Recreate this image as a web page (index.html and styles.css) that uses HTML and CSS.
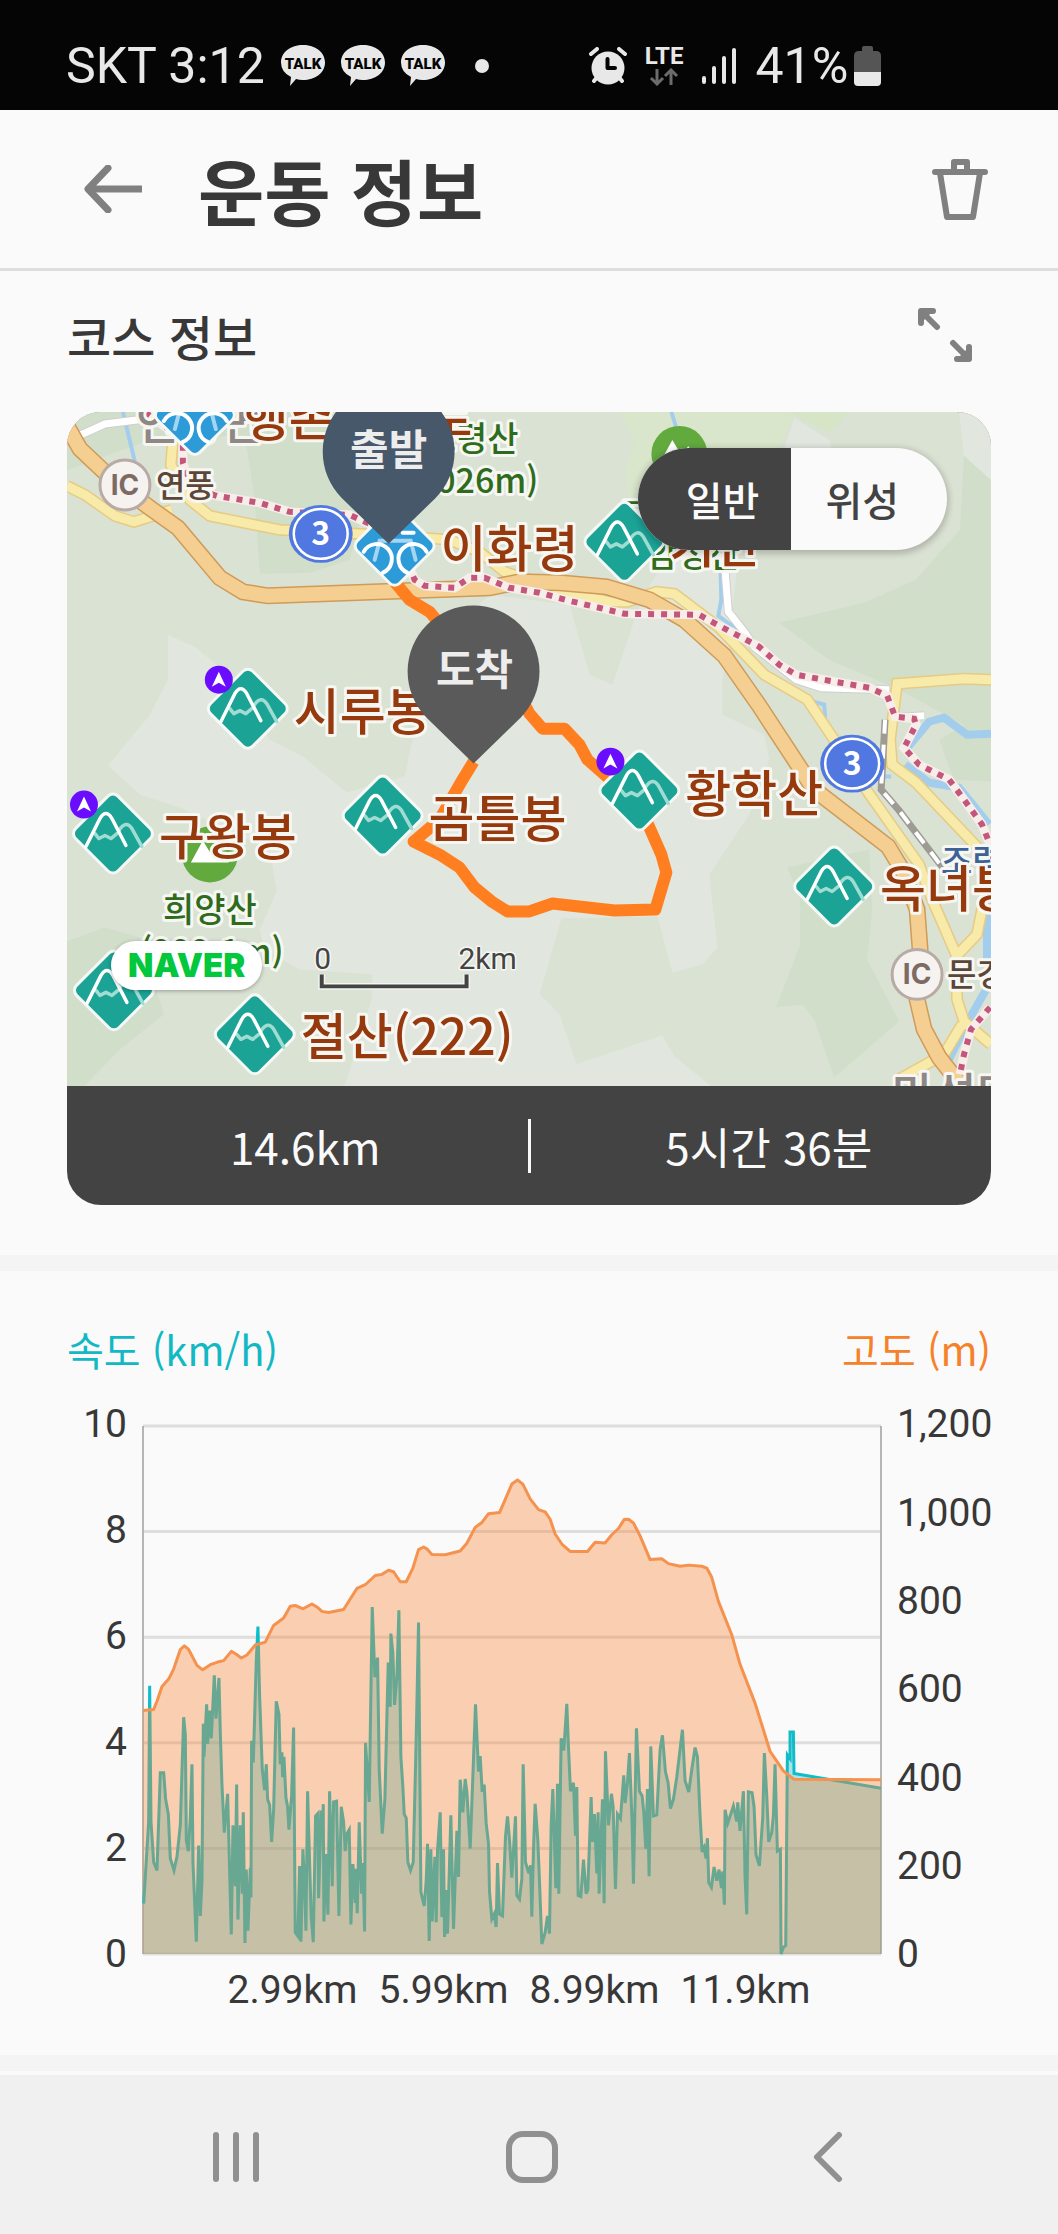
FILE: index.html
```html
<!DOCTYPE html>
<html lang="ko">
<head>
    <meta charset="UTF-8">
    <meta name="viewport" content="width=device-width, initial-scale=1.0">
    <title>운동 정보</title>
    <link rel="stylesheet" href="styles.css">
</head>
<body>
    <div class="status-bar">
        <div class="status-left">
            <span>SKT 3:12</span>
            <svg class="talk-icon" viewBox="0 0 44 42">
                <g id="talk">
                    <path d="M22 0C34 0 44 7 44 17.500S34 35 22 35Q18 35 15 34L9 41L10 32Q0 27 0 17.500C0 7 10 0 22 0Z" fill="#e8e8e8"/>
                    <text x="22" y="24" class="talk-text">TALK</text>
                </g>
            </svg>
            <svg class="talk-icon" viewBox="0 0 44 42"><use href="#talk"/></svg>
            <svg class="talk-icon" viewBox="0 0 44 42"><use href="#talk"/></svg>
            <span class="more-dot"></span>
        </div>
        <div class="status-right">
            <svg width="38" height="38" viewBox="0 0 38 38">
                <circle cx="19" cy="21" r="16.500" fill="#e8e8e8"/>
                <path d="M2 7L8 2M36 7L30 2M5 34L9 29M33 34L29 29" stroke="#e8e8e8" stroke-width="4" stroke-linecap="round"/>
                <path d="M18.500 12V21H26" fill="none" stroke="#050505" stroke-width="4" stroke-linecap="round" stroke-linejoin="round"/>
            </svg>
            <div class="lte">
                <span>LTE</span>
                <svg width="30" height="18" viewBox="0 0 30 18">
                    <path d="M8 1V15M2 10L8 16L14 10M22 17V3M16 8L22 2L28 8" fill="none" stroke="#6c6c6c" stroke-width="3"/>
                </svg>
            </div>
            <svg width="36" height="38" viewBox="0 0 36 38">
                <path d="M3 31V35M13 21V35M23 11V35M33 3V35" stroke="#e8e8e8" stroke-width="4" stroke-linecap="round"/>
            </svg>
            <span class="battery-text">41%</span>
            <svg width="27" height="40" viewBox="0 0 27 40">
                <path d="M8 5V2Q8 0 10 0H17Q19 0 19 2V5H22Q27 5 27 10V27H0V10Q0 5 5 5Z" fill="#555"/>
                <path d="M0 26H27V36Q27 40 23 40H4Q0 40 0 36Z" fill="#e8e8e8"/>
            </svg>
        </div>
    </div>

    <header class="app-bar">
        <button class="icon-button" aria-label="뒤로">
            <svg width="58" height="48" viewBox="0 0 58 48">
                <path d="M4 24H58" fill="none" stroke="#808080" stroke-width="7"/>
                <path d="M24 3L4 24L24 45" fill="none" stroke="#808080" stroke-width="7" stroke-linecap="round" stroke-linejoin="round"/>
            </svg>
        </button>
        <h1>운동 정보</h1>
        <button class="icon-button" aria-label="삭제">
            <svg width="56" height="63" viewBox="0 0 56 63">
                <g fill="none" stroke="#808080" stroke-width="6" stroke-linecap="round" stroke-linejoin="round">
                    <path d="M3 14H53M22 13V4H35V13"/>
                    <path d="M8 15L15 59H41L48 15"/>
                </g>
            </svg>
        </button>
    </header>

    <main>
        <section class="course">
            <div class="section-head">
                <h2>코스 정보</h2>
                <button class="icon-button" aria-label="지도 확대">
                    <svg width="54" height="54" viewBox="0 0 54 54">
                        <g fill="none" stroke="#808080" stroke-width="6" stroke-linecap="round" stroke-linejoin="round">
                            <path d="M15 3H3V15M4 4L19 19"/>
                            <path d="M39 51H51V39M50 50L35 35"/>
                        </g>
                        <path d="M3 3H15L3 15ZM51 51H39L51 39Z" fill="#808080"/>
                    </svg>
                </button>
            </div>

            <div class="course-card">
                <div class="map">
                    <svg class="map-canvas" viewBox="67 412 925 675" preserveAspectRatio="xMidYMid slice">
                        <defs>
                            <g id="mountain">
                                <rect x="-30" y="-30" width="60" height="60" rx="7" transform="rotate(45)" fill="#1ba396" stroke="#f5f8f5" stroke-width="3"/>
                                <g fill="none" stroke-linecap="round" stroke-linejoin="round" stroke-width="3.500">
                                    <path d="M-18 0L-14 5L-8 2L-2 5L4 0M6 -3Q13 -14 19 -5L29 13" stroke="#9fdcd2"/>
                                    <path d="M-27 13L-13 -15Q-7 -25 -1 -15L13 12" stroke="#fff"/>
                                </g>
                            </g>
                            <g id="bike">
                                <rect x="-30" y="-30" width="60" height="60" rx="7" transform="rotate(45)" fill="#2e9bd9" stroke="#f5f8f5" stroke-width="3"/>
                                <g fill="none" stroke-width="4" stroke-linecap="round">
                                    <path d="M-20 14L-15 -5H16L21 14" stroke="#a5d5f2"/>
                                    <path d="M8 -13H19M-31 6A15 15 0 1 1 -12 27M32 6A15 15 0 1 0 13 27" stroke="#fff"/>
                                </g>
                            </g>
                            <g id="compass">
                                <circle r="14" fill="#6a0dff"/>
                                <path d="M0 -8L7 7L0 3L-7 7Z" fill="#fff"/>
                            </g>
                            <g id="peak">
                                <circle r="28" fill="#62aa3e"/>
                                <path d="M-19 8L-7 -14L2 1L9 -8L19 8Z" fill="#fff"/>
                            </g>
                            <g id="route3">
                                <ellipse rx="32" ry="29" fill="#5078e0"/>
                                <ellipse rx="27" ry="25" fill="none" stroke="#fff" stroke-width="2.500"/>
                                <text y="11" class="shield-text">3</text>
                            </g>
                            <g id="ic">
                                <circle r="25" fill="#f5f2f0" stroke="#b8aaa4" stroke-width="3"/>
                                <text y="10" class="ic-text">IC</text>
                            </g>
                            <path id="pin" d="M-47 47A66 66 0 1 1 47 47L0 93Z"/>
                            <path id="lane" d="M67 440L85 433L105 424L145 419M725 560L729 612L745 632L755 647L797 680L822 688L890 690M896 718L925 716"/>
                            <path id="road" d="M67 486L85 495L115 516L134 522L172 510M173 440L171 465L190 500L210 516L280 530L400 536L450 540L480 552L505 572L560 590L610 602L628 602L657 592L675 594L720 628L765 675L808 700L835 740L860 780L920 865L933 900L957 955L958 1000L965 1022L992 1045M992 680L965 679L898 684L891 740L893 765L917 783L990 860M957 957L978 935L985 900M963 1025L945 1055L900 1080"/>
                            <path id="highway" d="M67 426L80 449L114 481L150 508L178 528L220 578L243 592L268 596L490 588L520 582L560 583L607 587L650 600L685 620L725 656L760 706L815 790L889 847L903 870L918 910L921 950L918 1000L925 1030L940 1058L965 1090"/>
                            <path id="trail" d="M145 412L183 440V463L192 488L217 496L260 503L290 512L350 515L370 524L400 545L415 580L425 586L455 588L470 578L485 578L510 588L540 593L570 601L625 614L700 615L720 626L760 647L780 665L797 675L830 681L870 688L888 696L896 717L915 719L917 725L905 748L920 765L950 780L965 800L983 825L991 845M991 1008L972 1030L965 1055L961 1075"/>
                            <path id="rail" d="M886 720L882 790L900 811L945 870"/>
                        </defs>

                        <!-- terrain -->
                        <rect x="67" y="412" width="925" height="675" fill="#dae2d3"/>
                        <g fill="#e1e7de">
                            <path d="M168 635L195 647L225 672L270 740L303 757L347 793L405 777L413 740L440 640L490 595L570 605L590 675L613 685L642 600L660 570L675 500H745L730 640L723 680V715L765 735L770 760L750 815L710 875L718 948L703 965L673 973L658 917L562 919L540 995L560 1015L577 1065L663 1036L675 1057L712 1087H345L372 1000L373 975L300 970L265 950L260 930L277 892L270 850L180 808L140 795L108 766L150 715L168 680Z"/>
                            <path d="M795 418L830 440L840 470H778Z"/>
                            <path d="M965 456L992 480V412H960Z"/>
                        </g>
                        <g fill="#d1dec9">
                            <path d="M67 470L150 440L245 435L255 500L260 574L310 573L350 560L390 412H67Z"/>
                            <path d="M965 456L961 530L917 580L865 603L780 623L830 660L900 690L992 740V480Z"/>
                            <path d="M788 868L870 850L873 910L868 960L900 1022L835 1078L815 1020L803 1005L777 1008L801 945V900Z"/>
                            <path d="M67 942L105 928L140 938L164 1015L120 1050L84 1087H67Z"/>
                            <path d="M940 740L992 710V782L955 780Z"/>
                        </g>
                        <path d="M620 412L636 442L625 470L630 500L660 520H760L780 445L798 412Z" fill="#d9e6cb"/>
                        <path d="M790 412L830 433L850 412Z" fill="#d5e5c5"/>

                        <!-- water -->
                        <g class="water">
                            <path d="M123 412L135 462M672 412L677 428M721 560L722 600L719 616L748 637M810 701L825 705L826 718M865 777H892" stroke-width="4"/>
                            <path d="M905 752L930 722L945 718L968 735L992 734M906 765L930 783L960 788L990 825M988 900V960M990 985L970 1020L950 1060" stroke-width="8"/>
                        </g>

                        <!-- roads, casing first -->
                        <g fill="none">
                            <use href="#lane" stroke="#cfcfcf" stroke-width="9"/>
                            <use href="#lane" stroke="#fff" stroke-width="7"/>
                            <use href="#road" stroke="#e6cb84" stroke-width="12"/>
                            <use href="#road" stroke="#f8eaa9" stroke-width="9"/>
                            <use href="#highway" stroke="#cf9b58" stroke-width="17"/>
                            <use href="#highway" stroke="#f5cf92" stroke-width="14"/>
                            <use href="#rail" stroke="#9e9b95" stroke-width="7"/>
                            <use href="#rail" stroke="#fff" stroke-width="4" stroke-dasharray="14 11"/>
                            <use href="#trail" stroke="#f7eeea" stroke-width="9"/>
                            <use href="#trail" stroke="#c4567b" stroke-width="6" stroke-dasharray="6 7"/>
                        </g>

                        <!-- recorded route -->
                        <path d="M395 582L410 600L430 612L445 630M520 695L530 714L543 729L565 729L580 745L588 760L605 775L640 805L662 855L667 873L656 910L615 911L553 904L530 912L508 912L492 902L475 888L460 868L440 855L414 842L440 820L463 780L474 762" fill="none" stroke="#ff7f20" stroke-width="12" stroke-linejoin="round"/>

                        <!-- places -->
                        <text x="136" y="439" class="town">연풍면</text>
                        <text x="893" y="1112" class="town">마성면</text>
                        <use href="#ic" x="125" y="485"/>
                        <text x="156" y="497" class="junction">연풍</text>
                        <use href="#ic" x="918" y="975"/>
                        <text x="948" y="987" class="junction">문경</text>
                        <use href="#route3" x="321" y="534"/>
                        <use href="#route3" x="853" y="764"/>
                        <use href="#peak" x="680" y="454"/>
                        <use href="#peak" x="210" y="855"/>
                        <g class="hill">
                            <text x="472" y="451">조령산</text>
                            <text x="472" y="493">(1026m)</text>
                            <text x="636" y="527">고</text>
                            <text x="694" y="567">암성산</text>
                            <text x="210" y="923">희양산</text>
                            <text x="212" y="965">(999.1m)</text>
                        </g>
                        <text x="942" y="875" class="station">조령</text>

                        <use href="#bike" x="195" y="415"/>
                        <use href="#bike" x="395" y="546"/>
                        <use href="#mountain" x="625" y="542"/>
                        <use href="#mountain" x="248" y="709"/>
                        <use href="#mountain" x="113" y="834"/>
                        <use href="#mountain" x="383" y="816"/>
                        <use href="#mountain" x="640" y="791"/>
                        <use href="#mountain" x="835" y="887"/>
                        <use href="#mountain" x="255" y="1035"/>
                        <use href="#mountain" x="114" y="991"/>
                        <use href="#compass" x="219" y="680"/>
                        <use href="#compass" x="84" y="805"/>
                        <use href="#compass" x="611" y="762"/>
                        <g class="summit">
                            <text x="243" y="436">행촌교차로</text>
                            <text x="441" y="567">이화령</text>
                            <text x="670" y="563">기산</text>
                            <text x="294" y="730">시루봉</text>
                            <text x="159" y="855">구왕봉</text>
                            <text x="429" y="837">곰틀봉</text>
                            <text x="686" y="812">황학산</text>
                            <text x="881" y="908">옥녀봉</text>
                            <text x="301" y="1056">절산(222)</text>
                        </g>

                        <!-- start and finish -->
                        <use href="#pin" x="389" y="451" fill="#46586a"/>
                        <text x="389" y="465" class="pin-text">출발</text>
                        <use href="#pin" x="474" y="671" fill="#5a5a5a"/>
                        <text x="475" y="685" class="pin-text">도착</text>

                        <!-- scale -->
                        <path d="M322 975V987H467V975" fill="none" stroke="#f2f5f0" stroke-width="7"/>
                        <path d="M322 975V987H467V975" fill="none" stroke="#444" stroke-width="4"/>
                        <text x="323" y="970" class="scale-text">0</text>
                        <text x="488" y="970" class="scale-text">2km</text>
                    </svg>
                    <div class="map-type">
                        <button class="selected">일반</button>
                        <button>위성</button>
                    </div>
                    <a class="naver" href="#">NAVER</a>
                </div>
                <div class="summary">
                    <span>14.6km</span>
                    <span>5시간 36분</span>
                </div>
            </div>
        </section>

        <section class="graph">
            <div class="legend">
                <span class="speed">속도 (km/h)</span>
                <span class="altitude">고도 (m)</span>
            </div>
            <div class="chart">
                <div class="axis axis-left">
                    <span>10</span><span>8</span><span>6</span><span>4</span><span>2</span><span>0</span>
                </div>
                <svg class="plot" viewBox="38 71 2215 1427" preserveAspectRatio="none">
                    <path class="grid-line" d="M38 71H2253M38 356H2253M38 642H2253M38 927H2253M38 1213H2253M38 1498H2253"/>
                    <path class="frame-line" d="M38 71V1498M2253 71V1498"/>
                    <path id="speedArea" class="speed-area"/>
                    <path id="speedLine" class="speed-line"/>
                    <path id="altitudeArea" class="altitude-area"/>
                    <path id="altitudeLine" class="altitude-line"/>
                </svg>
                <div class="axis axis-right">
                    <span>1,200</span><span>1,000</span><span>800</span><span>600</span><span>400</span><span>200</span><span>0</span>
                </div>
                <div class="distance">
                    <span>2.99km</span><span>5.99km</span><span>8.99km</span><span>11.9km</span>
                </div>
            </div>
        </section>
    </main>

    <nav class="nav-bar">
        <button class="icon-button" aria-label="최근 앱">
            <svg width="50" height="54" viewBox="0 0 50 54">
                <path d="M5 5V49M25 5V49M45 5V49" stroke="#909090" stroke-width="6" stroke-linecap="round"/>
            </svg>
        </button>
        <button class="icon-button" aria-label="홈">
            <svg width="54" height="54" viewBox="0 0 54 54">
                <rect x="4" y="4" width="46" height="46" rx="14" fill="none" stroke="#909090" stroke-width="6"/>
            </svg>
        </button>
        <button class="icon-button" aria-label="이전">
            <svg width="30" height="54" viewBox="0 0 30 54">
                <path d="M26 5L4 27L26 49" fill="none" stroke="#909090" stroke-width="6" stroke-linecap="round" stroke-linejoin="round"/>
            </svg>
        </button>
    </nav>

    <script>
        // x y pairs in plot units, the return part starts at RETURN_X
        const RETURN_X = 1080;
        const PLOT_BOTTOM = 1498;

        const speedOut = '40 1362 55 1140 58 773 62 1140 70 1250 80 1272 90 1008 100 1008 106 1080 114 1120 120 1240 131 1272 140 1235 150 1150 160 858 165 905 168 1190 174 1220 180 1130 185 985 188 1250 194 1380 198 1465 205 1205 210 1395 215 1300 219 876 221 965 229 823 232 930 238 840 243 915 252 745 257 862 266 752 270 900 275 1040 282 1170 292 1065 303 1445 308 1150 315 1315 319 1040 323 1405 330 1150 336 1335 339 1115 344 1468 348 1270 353 1435 360 1265 362 1345 364 922 369 980 378 705 383 613 388 800 396 1000 403 1055 408 985 412 1080 418 1095 424 1195 430 1110 438 815 446 850 450 985 455 953 457 1020 461 965 467 1075 472 1100 476 1162 484 1070 490 886 495 1440 503 1450 508 1260 512 1465 518 1215 523 1315 527 1435 532 1058 538 1250 543 1400 549 1466 556 1125 563 1118 565 1347 573 1110 577 1165 579 1093 581 1410 587 1228 593 1392 598 1058 606 1315 610 1087 619 1085 626 1395 633 1100 640 1140 645 1220 650 1173 657 1162 662 1418 668 1255 675 1360 677 1268 681 1388 687 1142 694 1335 698 1252 703 1437 706 927 717 1087 726 560 734 750 742 697 747 1000 756 1173 764 1080 774 710 780 830 782 632 788 685 793 825 800 750 806 569 812 965 818 1048 822 1120 828 1130 833 1250 841 1272 849 1250 858 915 865 602 872 1330 882 1368 888 1300 892 1200 897 1463 902 1215 906 1410 914 1235 918 1412 922 1218 930 1115 935 1398 940 1215 943 1452 948 1325 952 1443 962 1123 970 1430 980 1165 985 1290 990 1027 998 1115 1005 1025 1010 1060 1020 1213 1036 823 1045 1005 1050 963 1056 1060 1062 1040 1068 1145 1075 1200 1078 1330 1085 1403 1092 1390';
        const speedBack = '18 1425 22 1252 28 1390 37 1395 46 1180 52 1126 58 1190 65 1292 76 1126 80 1340 88 1350 95 1295 99 985 106 1250 116 1280 121 1258 125 1397 130 1215 135 1092 143 1190 149 1325 155 1471 165 1440 172 1395 178 1443 183 1150 188 1052 197 1320 202 1038 206 1335 213 915 221 948 230 822 235 940 241 1058 250 1035 256 1178 260 1047 264 1340 272 1343 280 1243 288 1335 293 1325 303 1074 307 1195 313 1120 320 1280 324 1115 327 1335 337 1080 342 1361 346 950 355 1150 364 1065 369 1100 376 1322 382 1120 391 1132 401 1015 405 1090 412 1035 418 955 426 1145 430 1308 439 888 448 1058 456 1070 461 1115 467 1213 472 1052 477 1288 482 937 490 1125 500 1122 510 945 517 907 526 1005 534 1035 541 1105 550 1080 560 1020 577 892 585 1030 596 1060 605 1000 615 940 622 965 630 1125 636 1222 642 1210 648 1240 652 1185 656 1305 664 1318 672 1263 680 1300 687 1270 694 1320 698 1275 703 1365 705 1108 713 1145 730 1098 740 1140 743 1088 750 1165 760 1058 765 1290 770 1391 775 1060 786 1062 792 1100 798 1230 808 1260 818 1130 823 955 830 1070 836 1195 845 1170 850 1125 855 985 862 1220 871 1215 873 1498 880 1480 887 1475 892 960 900 970 900 898 910 898 912 1010 1173 1050';
        const altitudeOut = '38 840 70 837 80 815 95 775 115 755 130 728 150 675 162 665 175 675 200 718 217 730 240 716 262 709 280 705 303 680 318 688 333 698 350 690 375 663 405 655 430 610 460 590 480 558 495 556 518 565 545 552 560 560 575 572 595 575 640 567 680 510 705 500 735 475 755 472 775 461 790 465 810 492 828 492 848 455 865 405 880 398 890 403 905 418 945 419 990 409 1010 388 1035 345 1055 332 1075 308';
        const altitudeBack = '28 305 45 270 65 228 82 217 98 228 120 268 145 297 165 303 180 323 195 363 215 390 240 410 292 410 315 385 345 387 365 365 385 348 402 324 415 323 430 333 450 368 480 432 515 430 535 443 570 450 595 447 635 450 650 455 665 480 685 545 725 635 750 715 795 820 840 950 880 1003 912 1026 1173 1027';

        function toPoints(text, offset) {
            const n = text.split(' ').map(Number);
            const points = [];
            for (let i = 0; i < n.length; i += 2) {
                points.push([n[i] + offset, n[i + 1]]);
            }
            return points;
        }

        function drawSeries(name, out, back) {
            const points = toPoints(out, 0).concat(toPoints(back, RETURN_X));
            const line = 'M' + points.map(p => p.join(' ')).join('L');
            const last = points[points.length - 1];
            document.getElementById(name + 'Line').setAttribute('d', line);
            document.getElementById(name + 'Area').setAttribute('d',
                line + 'L' + last[0] + ' ' + PLOT_BOTTOM + 'L' + points[0][0] + ' ' + PLOT_BOTTOM + 'Z');
        }

        drawSeries('speed', speedOut, speedBack);
        drawSeries('altitude', altitudeOut, altitudeBack);
    </script>
</body>
</html>
```
FILE: styles.css
```css
* {
    box-sizing: border-box;
}

body {
    margin: 0;
    background-color: #fafafa;
    color: #383838;
    font-family: "Noto Sans CJK KR", "Noto Sans", sans-serif;
}

button {
    margin: 0;
    padding: 0;
    border: 0;
    background: none;
    font-family: inherit;
    cursor: pointer;
}

svg {
    display: block;
    flex: none;
}

h1, h2 {
    margin: 0;
}

/* status bar */
.status-bar {
    display: flex;
    height: 110px;
    padding: 22px 66px 0;
    background-color: #050505;
    color: #e8e8e8;
    font-family: Roboto, sans-serif;
    font-size: 50px;
}

.status-left, .status-right {
    display: flex;
    align-items: center;
    gap: 16px;
}

.status-right {
    gap: 18px;
    margin-left: 100px;
}

.talk-icon {
    width: 44px;
    height: 42px;
}

.talk-text {
    font-family: Roboto, sans-serif;
    font-size: 15px;
    font-weight: 900;
    text-anchor: middle;
    fill: #050505;
}

.more-dot {
    width: 14px;
    height: 14px;
    margin-left: 14px;
    border-radius: 50%;
    background-color: #e8e8e8;
}

.lte {
    display: flex;
    flex-direction: column;
    align-items: center;
    gap: 2px;
    font-size: 24px;
    font-weight: 700;
    line-height: 20px;
}

.battery-text {
    margin-right: -12px;
}

/* header */
.app-bar {
    display: flex;
    align-items: center;
    height: 161px;
    padding: 0 70px 0 84px;
    border-bottom: 3px solid #dedede;
}

.app-bar h1 {
    flex: 1;
    margin-left: 56px;
    font-size: 72px;
    font-weight: 700;
    line-height: 100px;
}

/* course */
.course {
    padding: 0 67px 50px;
    border-bottom: 16px solid #f4f4f4;
}

.section-head {
    display: flex;
    align-items: center;
    justify-content: space-between;
    height: 141px;
    padding: 0 19px 14px 0;
}

.section-head h2 {
    font-size: 48px;
    font-weight: 500;
    line-height: 72px;
}

.course-card {
    overflow: hidden;
    border-radius: 34px;
    background-color: #434343;
}

.map {
    position: relative;
}

.map-canvas {
    width: 100%;
}

.water {
    fill: none;
    stroke: #a3cdec;
}

.map-canvas text {
    paint-order: stroke;
    stroke: #f6f7f3;
    stroke-width: 6px;
    stroke-linejoin: round;
    font-weight: 500;
}

.summit {
    font-size: 50px;
    fill: #963a0e;
}

.hill {
    font-size: 34px;
    text-anchor: middle;
    fill: #2f6b1c;
}

.station {
    font-size: 34px;
    fill: #3c6296;
}

.town {
    font-size: 46px;
    fill: #8f8784;
}

.junction {
    font-size: 32px;
    fill: #5c4637;
}

.map-canvas .ic-text, .map-canvas .shield-text, .map-canvas .pin-text {
    stroke: none;
    font-weight: 700;
    text-anchor: middle;
}

.ic-text {
    font-family: Inter, sans-serif;
    font-size: 28px;
    fill: #7d6a62;
}

.shield-text {
    font-size: 32px;
    fill: #fff;
}

.pin-text {
    font-size: 42px;
    fill: #ededed;
}

.map-canvas .scale-text {
    font-family: Roboto, sans-serif;
    font-size: 30px;
    font-weight: 400;
    text-anchor: middle;
    stroke-width: 3px;
    fill: #444;
}

.map-type {
    position: absolute;
    top: 36px;
    right: 44px;
    display: flex;
    overflow: hidden;
    border-radius: 51px;
    background-color: #fafafa;
    box-shadow: 0 2px 6px 2px rgba(0, 0, 0, 0.2);
}

.map-type button {
    height: 102px;
    padding: 0 48px 0 34px;
    color: #434343;
    font-size: 40px;
    font-weight: 500;
}

.map-type .selected {
    padding: 0 32px 0 48px;
    background-color: #434343;
    color: #fafafa;
}

.naver {
    position: absolute;
    bottom: 96px;
    left: 44px;
    padding: 0 17px;
    border-radius: 25px;
    background-color: #fff;
    box-shadow: 0 1px 4px rgba(0, 0, 0, 0.3);
    color: #03c73c;
    font-family: Inter, sans-serif;
    font-size: 33px;
    font-weight: 900;
    line-height: 49px;
    text-decoration: none;
}

.summary {
    display: flex;
    align-items: center;
    height: 119px;
    color: #fafafa;
    font-size: 44px;
}

.summary span {
    flex: 1;
    padding-left: 16px;
    line-height: 54px;
    text-align: center;
}

.summary span + span {
    border-left: 3px solid #fafafa;
}

/* graph */
.graph {
    margin-bottom: 4px;
    padding: 48px 67px 43px;
    border-bottom: 16px solid #f4f4f4;
}

.legend {
    display: flex;
    justify-content: space-between;
    margin-bottom: 47px;
    font-size: 40px;
    line-height: 60px;
}

.speed {
    color: #12b8c4;
}

.altitude {
    color: #f5822a;
}

.chart {
    display: grid;
    grid-template-columns: 60px 1fr 94px;
    column-gap: 16px;
    font-family: Roboto, sans-serif;
    font-size: 39px;
    line-height: 44px;
}

.axis {
    display: flex;
    flex-direction: column;
    justify-content: space-between;
    margin: -24px 0 -22px;
}

.axis-left {
    text-align: right;
}

.plot {
    width: 100%;
    height: 528px;
    overflow: visible;
}

.plot path {
    fill: none;
    vector-effect: non-scaling-stroke;
}

.grid-line {
    stroke: #dedede;
    stroke-width: 3px;
}

.frame-line {
    stroke: #b5b5b5;
    stroke-width: 2px;
}

.plot .speed-area {
    fill: #17bfcb;
    fill-opacity: 0.37;
}

.speed-line {
    stroke: #0fbcc8;
    stroke-width: 3px;
}

.plot .altitude-area {
    fill: #f9863a;
    fill-opacity: 0.38;
}

.altitude-line {
    stroke: #f5924e;
    stroke-width: 3px;
    stroke-linejoin: round;
}

.distance {
    display: flex;
    grid-column: 2;
    justify-content: center;
    gap: 21px;
    margin-top: 14px;
    padding-left: 14px;
}

/* navigation bar */
.nav-bar {
    display: grid;
    grid-template-columns: repeat(3, 1fr);
    height: 159px;
    padding: 5px 82px 0 88px;
    background-color: #f0f0f0;
}

.nav-bar .icon-button {
    display: flex;
    align-items: center;
    justify-content: center;
}
```
